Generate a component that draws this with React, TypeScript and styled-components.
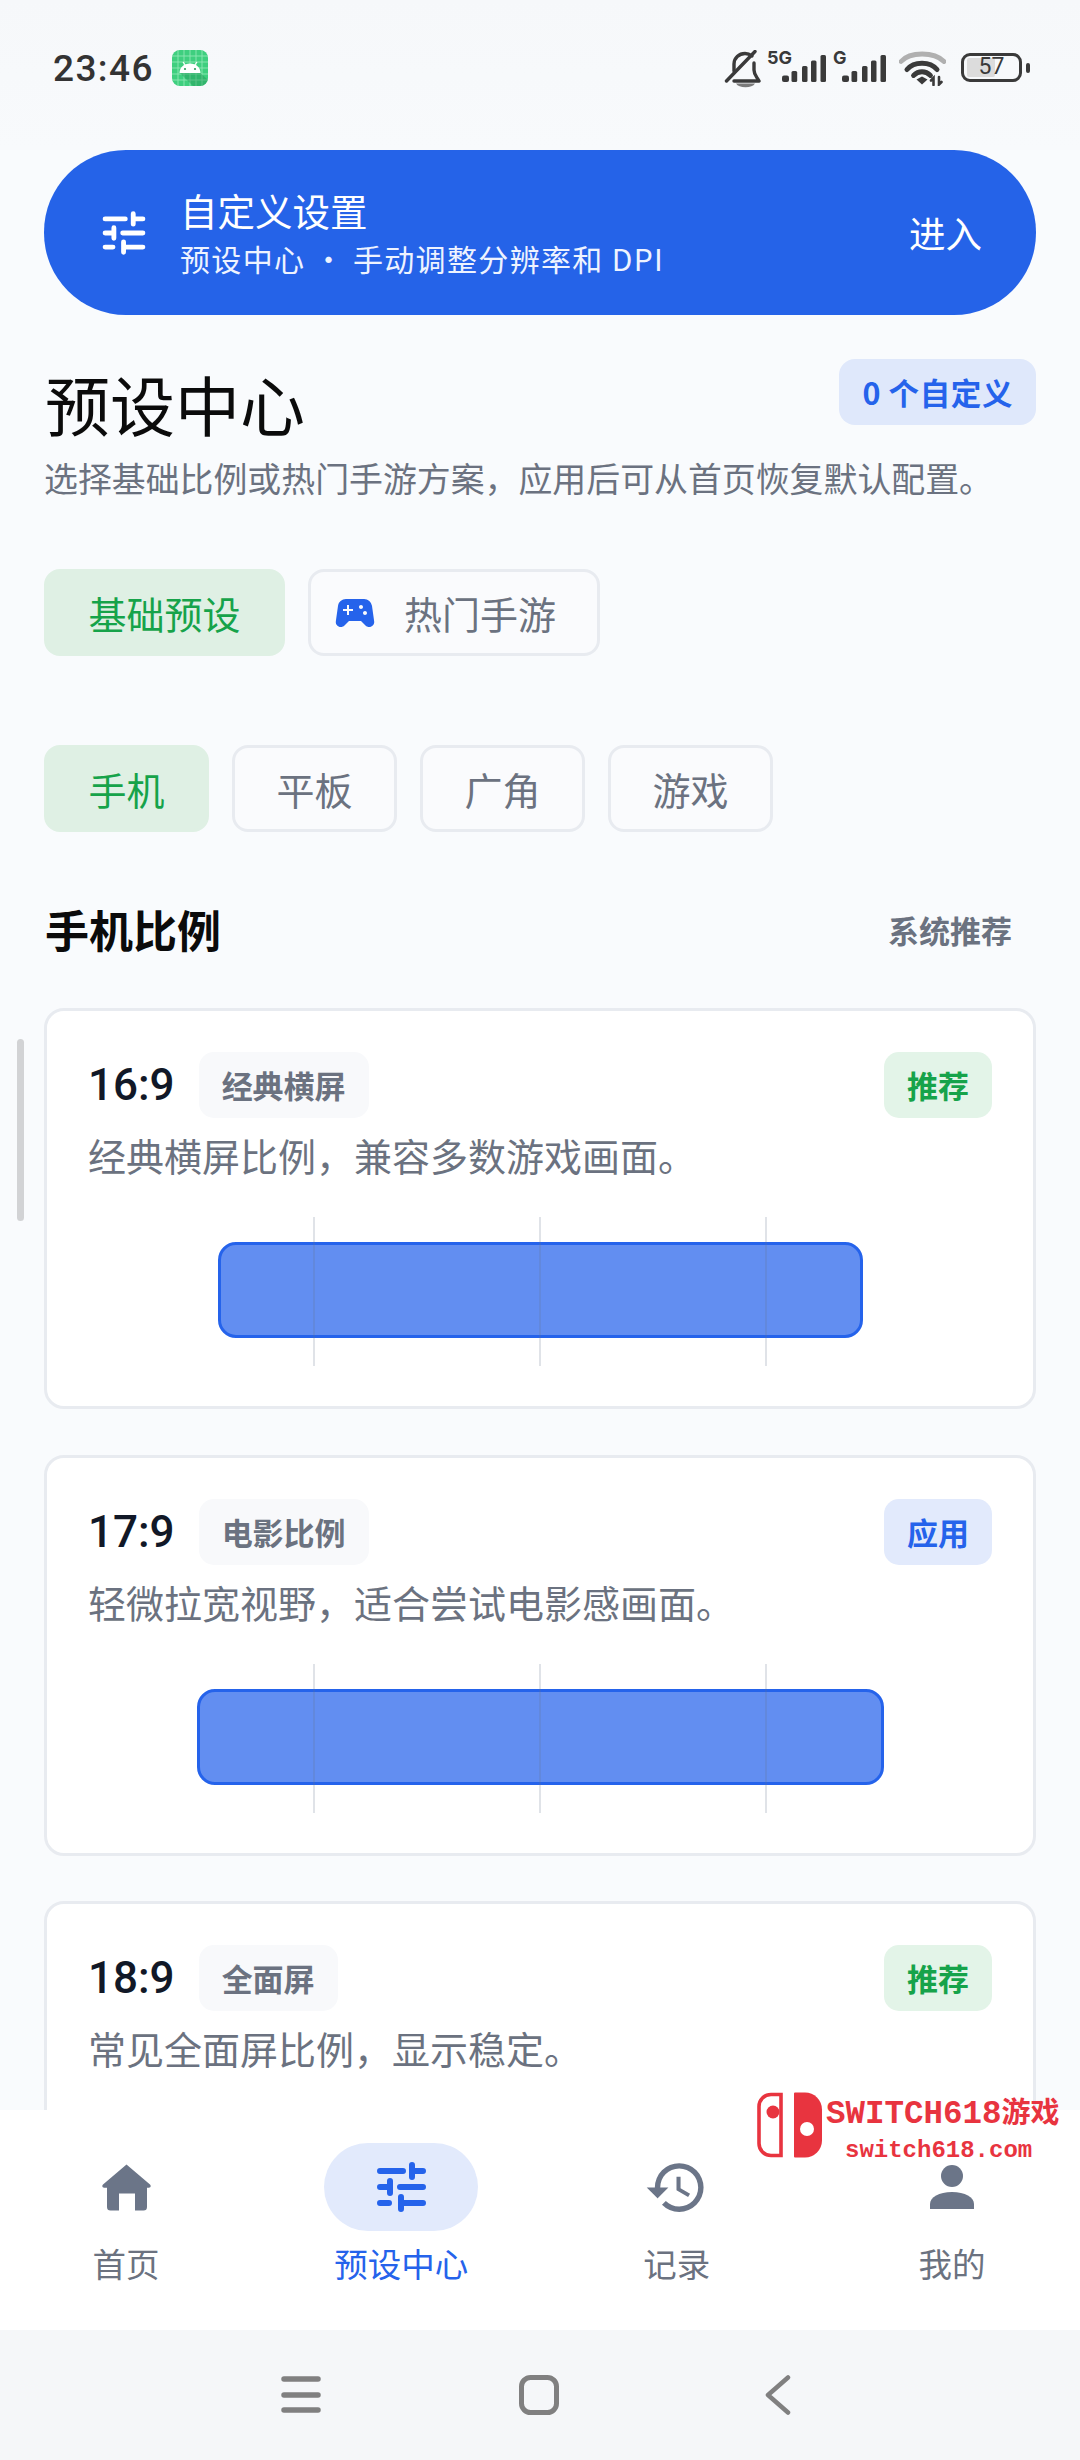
import React from "react";
import styled, { createGlobalStyle } from "styled-components";
import { MdHistory, MdSportsEsports } from "react-icons/md";

const Global = createGlobalStyle`
  html, body { margin: 0; padding: 0; background: #f8fafc; }
  * { box-sizing: border-box; }
  body { font-family: "Noto Sans CJK SC", "Noto Sans", sans-serif; }
`;

const Screen = styled.div`
  position: relative;
  width: 1080px;
  height: 2460px;
  overflow: hidden;
  display: flex;
  flex-direction: column;
  background: #f9fbfd;
`;

const StatusBar = styled.div`
  flex: none;
  height: 150px;
  padding: 50px 50px 0 53px;
  display: flex;
  justify-content: space-between;
  align-items: flex-start;
  background: linear-gradient(#f6f8fa, #f8fafc);
`;
const StatusLeft = styled.div`
  display: flex;
  align-items: center;
  gap: 18px;
  height: 36px;
`;
const Clock = styled.span`
  font-family: Roboto, "Noto Sans", sans-serif;
  font-weight: 500;
  font-size: 37px;
  letter-spacing: 1.4px;
  color: #333;
`;
const StatusRight = styled.div`
  display: flex;
  align-items: flex-start;
  height: 38px;
`;
const Signal = styled.div<{ $w: number; $ml: number }>`
  position: relative;
  width: ${(p) => p.$w}px;
  height: 38px;
  margin-left: ${(p) => p.$ml}px;
  flex: none;
`;
const NetLabel = styled.span`
  position: absolute;
  left: 0;
  top: -2px;
  font-family: Inter, Roboto, sans-serif;
  font-weight: 700;
  font-size: 18px;
  line-height: 20px;
  color: #3a3a3a;
`;
const Battery = styled.div`
  flex: none;
  margin-left: 15px;
  margin-top: 3px;
  width: 61px;
  height: 29px;
  border: 3.5px solid #3a3a3a;
  border-radius: 9px;
  padding: 2px 3px;
  position: relative;
  display: flex;
`;
const BatteryFill = styled.div`
  width: 57%;
  background: #dcdcdc;
  border-radius: 2px;
`;
const BatteryText = styled.span`
  position: absolute;
  left: 0;
  right: 0;
  top: 0;
  bottom: 0;
  text-align: center;
  font-family: Roboto, sans-serif;
  font-size: 23px;
  line-height: 22px;
  color: #3a3a3a;
`;
const BatteryNub = styled.div`
  flex: none;
  width: 4px;
  height: 10px;
  margin: 13px 0 0 4px;
  border-radius: 2px;
  background: #3a3a3a;
`;

const Scroll = styled.div`
  flex: 1;
  min-height: 0;
  overflow: hidden;
  padding: 0 44px;
`;

const Banner = styled.div`
  height: 165px;
  border-radius: 82px;
  background: #2563e8;
  color: #fff;
  display: flex;
  align-items: center;
  padding: 0 54px 0 58px;
`;
const BannerText = styled.div`
  flex: 1;
  margin-left: 34px;
`;
const BannerTitle = styled.div`
  font-size: 37.5px;
  line-height: 50px;
`;
const BannerSub = styled.div`
  font-size: 30px;
  line-height: 46px;
  letter-spacing: 1.35px;
  white-space: pre;
  color: #eef3ff;
`;
const BannerAction = styled.div`
  font-size: 36.5px;
  line-height: 50px;
`;

const Head = styled.div`
  display: flex;
  justify-content: space-between;
  align-items: flex-start;
  margin-top: 44px;
`;
const Title = styled.h1`
  margin: 0 0 0 1px;
  font-size: 65px;
  line-height: 88px;
  font-weight: 400;
  color: #0b0b0b;
`;
const CountBadge = styled.div`
  height: 66px;
  padding: 0 23px;
  border-radius: 16px;
  background: #dfe8fb;
  color: #2563eb;
  font-size: 30.5px;
  font-weight: 700;
  letter-spacing: 0.6px;
  line-height: 66px;
  white-space: pre;
`;
const Lead = styled.p`
  margin: 9px 0 0;
  font-size: 33.9px;
  line-height: 44px;
  color: #6b7280;
  white-space: nowrap;
`;

const TabRow = styled.div<{ $mt: number }>`
  display: flex;
  gap: 23px;
  margin-top: ${(p) => p.$mt}px;
`;
const Tab = styled.div<{ $active?: boolean; $icon?: boolean }>`
  height: 87px;
  display: flex;
  align-items: center;
  gap: 25px;
  padding: ${(p) => (p.$icon ? "0 41px 0 20px" : "0 41.5px")};
  border-radius: 16px;
  border: 3px solid ${(p) => (p.$active ? "#dff0e4" : "#e8ebf0")};
  background: ${(p) => (p.$active ? "#dff0e4" : "#fafbfd")};
  color: ${(p) => (p.$active ? "#16a34a" : "#6b7280")};
  font-size: 38px;
  svg { color: #2563eb; }
`;

const SectionHead = styled.div`
  margin-top: 67px;
  height: 60px;
  display: flex;
  justify-content: space-between;
  align-items: center;
`;
const SectionTitle = styled.h2`
  margin: 0 0 0 1px;
  font-size: 44px;
  font-weight: 700;
  color: #0b0b0b;
`;
const SectionNote = styled.span`
  padding: 0 24px;
  font-size: 31px;
  font-weight: 700;
  color: #6b7280;
`;

const CardList = styled.div`
  margin-top: 49px;
  display: flex;
  flex-direction: column;
  gap: 45.6px;
`;
const Card = styled.section`
  flex: none;
  height: 401px;
  padding: 41px;
  background: #fff;
  border: 3px solid #e8ebf0;
  border-radius: 20px;
`;
const CardTop = styled.div`
  display: flex;
  align-items: center;
  height: 66px;
`;
const Ratio = styled.span`
  font-family: Roboto, Inter, sans-serif;
  font-weight: 500;
  font-size: 44px;
  color: #111827;
  margin-right: 24px;
`;
const Chip = styled.span`
  height: 66px;
  line-height: 66px;
  padding: 0 23px;
  border-radius: 15px;
  background: #f8f9fb;
  color: #6b7280;
  font-size: 31px;
  font-weight: 700;
`;
const Tag = styled.span<{ $tone: "green" | "blue" }>`
  margin-left: auto;
  height: 66px;
  line-height: 66px;
  padding: 0 23px;
  border-radius: 15px;
  font-size: 31px;
  font-weight: 700;
  background: ${(p) => (p.$tone === "green" ? "#e3f4e8" : "#e2eafc")};
  color: ${(p) => (p.$tone === "green" ? "#16a34a" : "#2563eb")};
`;
const Desc = styled.p`
  margin: 12px 0 0;
  font-size: 38px;
  line-height: 50px;
  color: #6b7280;
  white-space: nowrap;
`;
const Preview = styled.div`
  position: relative;
  margin-top: 37px;
  height: 149px;
  display: flex;
  justify-content: center;
  align-items: center;
`;
const Frame = styled.div`
  height: 96px;
  margin-top: -3px;
  border-radius: 18px;
  border: 3.5px solid #2563eb;
  background: rgba(37, 99, 235, 0.72);
`;
const GuideLine = styled.i<{ $at: number }>`
  position: absolute;
  top: 0;
  bottom: 0;
  left: ${(p) => p.$at}%;
  width: 2px;
  margin-left: -1px;
  background: rgba(100, 116, 139, 0.2);
`;

const Scrollbar = styled.div`
  position: absolute;
  left: 17px;
  top: 1039px;
  width: 7px;
  height: 182px;
  border-radius: 4px;
  background: #d2d3d5;
`;

const BottomNav = styled.nav`
  flex: none;
  height: 220px;
  padding: 33px 48px 0 46px;
  background: #fff;
  display: flex;
  justify-content: space-between;
  align-items: flex-start;
  position: relative;
`;
const NavItem = styled.div<{ $active?: boolean }>`
  width: 160px;
  display: flex;
  flex-direction: column;
  align-items: center;
  color: ${(p) => (p.$active ? "#2563eb" : "#6b7588")};
`;
const NavIcon = styled.div<{ $active?: boolean }>`
  width: 154px;
  height: 88px;
  border-radius: 44px;
  display: flex;
  align-items: center;
  justify-content: center;
  background: ${(p) => (p.$active ? "#e2eafc" : "transparent")};
`;
const NavLabel = styled.span<{ $active?: boolean }>`
  margin-top: 12px;
  font-size: 33.5px;
  line-height: 40px;
  color: ${(p) => (p.$active ? "#2563eb" : "#6b7280")};
`;

const SystemBar = styled.div`
  flex: none;
  height: 130px;
  background: #f5f7f9;
  padding: 45px 0 0 281px;
  display: flex;
  align-items: flex-start;
  gap: 198px;
`;
const BackButton = styled.div`
  margin-left: 8px;
  display: flex;
`;

const Watermark = styled.div`
  position: absolute;
  left: 757px;
  top: 2092px;
  display: flex;
  gap: 3px;
  color: #e8343f;
`;
const WatermarkText = styled.div`
  font-family: "Liberation Mono", "Noto Sans CJK SC", monospace;
  font-weight: 700;
  white-space: nowrap;
  padding-top: 1px;
`;
const WatermarkTop = styled.div`
  font-size: 32.5px;
  line-height: 34px;
  span {
    font-family: "Noto Sans CJK SC", sans-serif;
    font-size: 29px;
  }
`;
const WatermarkBottom = styled.div`
  font-size: 24px;
  line-height: 28px;
  margin: 5px 0 0 19px;
`;

const Tune = ({ w, h, sw = 6 }: { w: number; h: number; sw?: number }) => (
  <svg width={w} height={h} viewBox="0 0 49 50" fill="none" stroke="currentColor" strokeWidth={sw} strokeLinecap="round">
    <path d="M3 9h23M35 3v12M35 9h11M3 25h10M13 19v12M23 25h23M3 41h9M24 35v12M24 41h22" />
  </svg>
);

const Home = () => (
  <svg width="49" height="47" viewBox="0 0 49 47" fill="currentColor">
    <path d="M24.5 0.500 48 20.500c1.400 1.300.5 3.200-1.200 3.200H45V43a3.500 3.500 0 0 1-3.500 3.500H33V29.500H17V46.500H8.500A3.500 3.500 0 0 1 5 43V23.700H2.200c-1.700 0-2.600-1.900-1.200-3.200z" />
  </svg>
);

const Person = () => (
  <svg width="44" height="44" viewBox="0 0 44 44" fill="currentColor">
    <ellipse cx="22" cy="11" rx="11" ry="11" />
    <path d="M0 44v-5C0 32 9 27 22 27s22 5 22 12v5z" />
  </svg>
);

const AndroidBadge = () => (
  <svg width="36" height="36" viewBox="0 0 36 36">
    <rect width="36" height="36" rx="8" fill="#3fcf7f" />
    <path d="M6 0v36M12 0v36M18 0v36M24 0v36M30 0v36M0 6h36M0 12h36M0 18h36M0 24h36M0 30h36" stroke="#8ee8b4" strokeWidth="0.9" />
    <path d="M8 23H28.500L36 30v-2 0a8 8 0 0 1-8 8H21z" fill="#1f8f50" opacity="0.4" />
    <path d="M7.500 23c0-5.500 4.500-9.500 10.500-9.500s10.500 4 10.500 9.500z" fill="#fff" />
    <path d="M11 12l2.500 3.500M25 12l-2.500 3.500" stroke="#fff" strokeWidth="1.200" />
    <circle cx="13" cy="19" r="1.100" fill="#2f9d60" />
    <circle cx="23" cy="19" r="1.100" fill="#2f9d60" />
  </svg>
);

const BellOff = () => (
  <svg width="37" height="38" viewBox="0 0 37 38" fill="none" stroke="#3a3a3a" strokeWidth="3.400" strokeLinecap="round" strokeLinejoin="round">
    <path d="M10 21V14C10 8 15 3.500 21 3.500c3 0 5 1 7 2.500" />
    <path d="M30 13v7c0 5 3 7 5 11H10" />
    <path d="M31 1.500 2.500 31" />
    <path d="M12 33.500h19c-1.500 2.500-5 3.700-9.500 3.700S13.500 36 12 33.500z" fill="#7a7a7a" stroke="none" />
  </svg>
);

const Bars = ({ x }: { x: number }) => (
  <svg width="44" height="28" viewBox="0 0 44 28" fill="#3a3a3a" style={{ position: "absolute", left: x, top: 5 }}>
    <rect x="0" y="20.500" width="7" height="6.500" rx="2" />
    <rect x="9.500" y="16" width="5.700" height="11" rx="1.500" />
    <rect x="20" y="11" width="5.500" height="16" rx="1.500" />
    <rect x="29" y="5.500" width="5.500" height="21.500" rx="1.500" />
    <rect x="38.500" y="0" width="5.500" height="27" rx="1.500" />
  </svg>
);

const Wifi = () => (
  <svg width="47" height="36" viewBox="0 0 47 36" fill="none" strokeLinecap="round">
    <path d="M2 11.500C11 1.500 35 1.500 45 11.500" stroke="#b0b0b0" strokeWidth="4.800" />
    <path d="M8 19.500C15 11 31 11 38 19.500" stroke="#3a3a3a" strokeWidth="5" />
    <path d="M14.500 25.500c5-5 12-5 17 0" stroke="#3a3a3a" strokeWidth="4.800" />
    <path d="M17.500 29.500 23 26.500l5.500 3L23 34.500z" fill="#3a3a3a" />
    <path d="M34.500 35v-7l-2.500 2.500M40 27v7.500l2.500-2.500" stroke="#3a3a3a" strokeWidth="2.600" />
  </svg>
);

const JoyLogo = () => (
  <svg width="66" height="66" viewBox="0 0 66 66">
    <path d="M24 2.500H14A12 12 0 0 0 2 14.500v37a12 12 0 0 0 12 12h10z" fill="none" stroke="#e8343f" strokeWidth="3.600" />
    <circle cx="16" cy="20" r="6.500" fill="#e8343f" />
    <path d="M38 0.500h10a17 17 0 0 1 17 17v31a17 17 0 0 1-17 17H38a1 1 0 0 1-1-1v-63a1 1 0 0 1 1-1z" fill="#e8343f" />
    <circle cx="50" cy="37" r="7" fill="#fff" />
  </svg>
);

const cards = [
  { ratio: "16:9", chip: "经典横屏", tag: "推荐", tone: "green" as const, desc: "经典横屏比例，兼容多数游戏画面。", width: 645 },
  { ratio: "17:9", chip: "电影比例", tag: "应用", tone: "blue" as const, desc: "轻微拉宽视野，适合尝试电影感画面。", width: 687 },
  { ratio: "18:9", chip: "全面屏", tag: "推荐", tone: "green" as const, desc: "常见全面屏比例，显示稳定。", width: 729 },
];

export default function App() {
  return (
    <Screen>
      <Global />
      <StatusBar>
        <StatusLeft>
          <Clock>23:46</Clock>
          <AndroidBadge />
        </StatusLeft>
        <StatusRight>
          <BellOff />
          <Signal $w={59} $ml={6}>
            <NetLabel>5G</NetLabel>
            <Bars x={15} />
          </Signal>
          <Signal $w={53} $ml={7}>
            <NetLabel>G</NetLabel>
            <Bars x={9} />
          </Signal>
          <Signal $w={47} $ml={13}>
            <Wifi />
          </Signal>
          <Battery>
            <BatteryFill />
            <BatteryText>57</BatteryText>
          </Battery>
          <BatteryNub />
        </StatusRight>
      </StatusBar>

      <Scroll>
        <Banner>
          <Tune w={44} h={44} sw={5.5} />
          <BannerText>
            <BannerTitle>自定义设置</BannerTitle>
            <BannerSub>预设中心 · 手动调整分辨率和 DPI</BannerSub>
          </BannerText>
          <BannerAction>进入</BannerAction>
        </Banner>

        <Head>
          <Title>预设中心</Title>
          <CountBadge>0 个自定义</CountBadge>
        </Head>
        <Lead>选择基础比例或热门手游方案，应用后可从首页恢复默认配置。</Lead>

        <TabRow $mt={69}>
          <Tab $active>基础预设</Tab>
          <Tab $icon>
            <MdSportsEsports size={48} />
            热门手游
          </Tab>
        </TabRow>
        <TabRow $mt={89}>
          <Tab $active>手机</Tab>
          <Tab>平板</Tab>
          <Tab>广角</Tab>
          <Tab>游戏</Tab>
        </TabRow>

        <SectionHead>
          <SectionTitle>手机比例</SectionTitle>
          <SectionNote>系统推荐</SectionNote>
        </SectionHead>

        <CardList>
          {cards.map((c) => (
            <Card key={c.ratio}>
              <CardTop>
                <Ratio>{c.ratio}</Ratio>
                <Chip>{c.chip}</Chip>
                <Tag $tone={c.tone}>{c.tag}</Tag>
              </CardTop>
              <Desc>{c.desc}</Desc>
              <Preview>
                <Frame style={{ width: c.width }} />
                <GuideLine $at={25} />
                <GuideLine $at={50} />
                <GuideLine $at={75} />
              </Preview>
            </Card>
          ))}
        </CardList>
      </Scroll>

      <BottomNav>
        <NavItem>
          <NavIcon><Home /></NavIcon>
          <NavLabel>首页</NavLabel>
        </NavItem>
        <NavItem $active>
          <NavIcon $active><Tune w={49} h={50} /></NavIcon>
          <NavLabel $active>预设中心</NavLabel>
        </NavItem>
        <NavItem>
          <NavIcon><MdHistory size={65} /></NavIcon>
          <NavLabel>记录</NavLabel>
        </NavItem>
        <NavItem>
          <NavIcon><Person /></NavIcon>
          <NavLabel>我的</NavLabel>
        </NavItem>
      </BottomNav>

      <SystemBar>
        <svg width="40" height="40" viewBox="0 0 40 40" stroke="#808080" strokeWidth="5.500" strokeLinecap="round">
          <path d="M3 4h34M3 20h34M3 35h34" />
        </svg>
        <svg width="40" height="40" viewBox="0 0 40 40" fill="none" stroke="#808080" strokeWidth="5">
          <rect x="2.500" y="2.500" width="35" height="35" rx="9" />
        </svg>
        <BackButton>
          <svg width="26" height="40" viewBox="0 0 26 40" fill="none" stroke="#808080" strokeWidth="4.500" strokeLinecap="round" strokeLinejoin="round">
            <path d="M23 2.500 3 20l20 17.500" />
          </svg>
        </BackButton>
      </SystemBar>

      <Scrollbar />
      <Watermark>
        <JoyLogo />
        <WatermarkText>
          <WatermarkTop>SWITCH618<span>游戏</span></WatermarkTop>
          <WatermarkBottom>switch618.com</WatermarkBottom>
        </WatermarkText>
      </Watermark>
    </Screen>
  );
}
